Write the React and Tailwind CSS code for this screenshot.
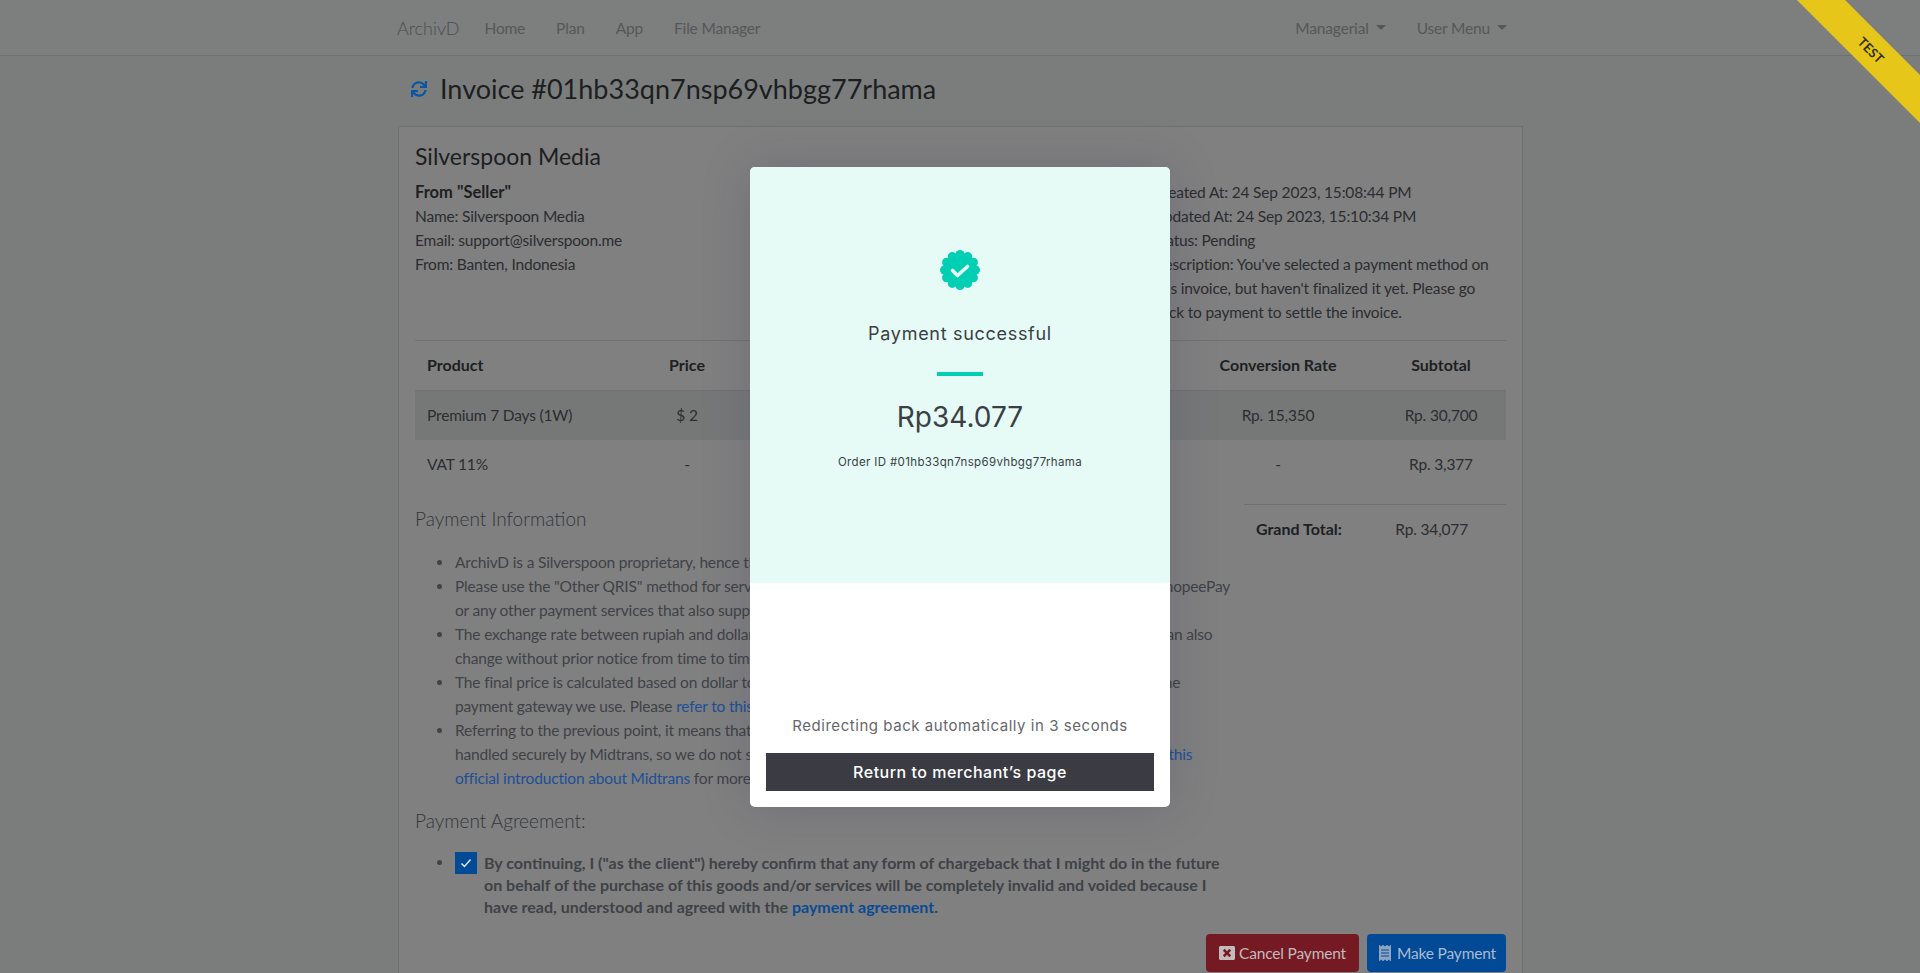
import React from "react";
import { FaSync, FaWindowClose, FaReceipt } from "react-icons/fa";

function Badge() {
  const bumps = Array.from({ length: 12 }, (_, i) => {
    const a = (i * Math.PI) / 6;
    return [20 + 15.5 * Math.cos(a), 20 + 15.5 * Math.sin(a)];
  });
  return (
    <svg width="40" height="40" viewBox="0 0 40 40">
      <circle cx="20" cy="20" r="17" fill="#00cfb4" />
      {bumps.map(([x, y], i) => (
        <circle key={i} cx={x} cy={y} r="4.5" fill="#00cfb4" />
      ))}
      <path d="M12.5 20.5l5 5 10-9" fill="none" stroke="#e6faf6" strokeWidth="3.6" strokeLinecap="round" strokeLinejoin="round" />
    </svg>
  );
}

function Li({ children }) {
  return (
    <li className="flex">
      <span className="w-[40px] shrink-0 pl-[22px] pt-[10px]"><span className="block w-[5px] h-[5px] rounded-full bg-[#3f4246]" /></span>
      <div>{children}</div>
    </li>
  );
}

const L = ({ children }) => <span className="block whitespace-nowrap">{children}</span>;
const A = ({ children }) => <span className="text-[#1d4f96]">{children}</span>;

function Th({ children, className }) {
  return <th className={`font-bold text-[16px] tracking-normal text-[#1d1f22] p-3 h-[49px] ${className || ""}`}>{children}</th>;
}
function Td({ children, className }) {
  return <td className={`px-3 py-0 ${className || ""}`}>{children}</td>;
}

export default function App() {
  return (
    <div className="relative h-[973px] overflow-hidden bg-[#7b7d7d] font-['Lato','Liberation_Sans',sans-serif] text-[15.5px] tracking-[-0.17px] leading-6 text-[#2b2d30]">
      <nav className="h-[56px] bg-[#7d7e7e] border-b border-[#6e7070]">
        <div className="w-[1140px] mx-auto pl-[7px] pr-[23px] h-[55px] flex items-center text-[#565758]">
          <span className="text-[18px] font-light tracking-normal text-[#4c4d4e] mr-[25px]">ArchivD</span>
          <div className="flex gap-[31px]">
            <span>Home</span>
            <span>Plan</span>
            <span>App</span>
            <span>File Manager</span>
          </div>
          <div className="ml-auto flex gap-[31px]">
            <span className="flex items-center">Managerial<span className="ml-[7px] border-t-[5px] border-x-[5px] border-x-transparent border-t-[#565758]" /></span>
            <span className="flex items-center">User Menu<span className="ml-[7px] border-t-[5px] border-x-[5px] border-x-transparent border-t-[#565758]" /></span>
          </div>
        </div>
      </nav>

      <main className="w-[1125px] ml-[398px]">
        <h1 className="h-[70px] flex items-center pl-[13px] pb-[5px] text-[27px] tracking-normal leading-[34px] text-[#1c1e21]">
          <FaSync className="w-4 h-4 text-[#0a56a5] mr-[13px] mt-[1px]" />
          <span>Invoice #01hb33qn7nsp69vhbgg77rhama</span>
        </h1>

        <section className="bg-[#808080] border border-[#6e7070] px-4 pt-[15px] h-[860px]">
          <div className="flex h-[199px] border-b border-[#6f7171]">
            <div className="w-[738px]">
              <h2 className="text-[23px] tracking-normal leading-[29px] text-[#1c1e21] mb-[9px]">Silverspoon Media</h2>
              <b className="block text-[16.5px] tracking-normal text-[#1d1f22]">From "Seller"</b>
              <p>Name: Silverspoon Media</p>
              <p>Email: support@silverspoon.me</p>
              <p>From: Banten, Indonesia</p>
            </div>
            <div className="pt-[38px] whitespace-nowrap">
              <p>Created At: 24 Sep 2023, 15:08:44 PM</p>
              <p>Updated At: 24 Sep 2023, 15:10:34 PM</p>
              <p>Status: Pending</p>
              <p>Description: You've selected a payment method on</p>
              <p>this invoice, but haven't finalized it yet. Please go</p>
              <p>back to payment to settle the invoice.</p>
            </div>
          </div>

          <table className="w-[1091px] table-fixed border-collapse text-center">
            <colgroup>
              <col className="w-[225px]" />
              <col className="w-[94px]" />
              <col className="w-[223px]" />
              <col className="w-[223px]" />
              <col className="w-[196px]" />
              <col className="w-[130px]" />
            </colgroup>
            <thead>
              <tr className="h-[49px] border-b border-[#6f7171]">
                <Th className="text-left">Product</Th>
                <Th>Price</Th>
                <Th>Quantity</Th>
                <Th>Total Price</Th>
                <Th>Conversion Rate</Th>
                <Th>Subtotal</Th>
              </tr>
            </thead>
            <tbody>
              <tr className="bg-[#767878] h-[50px]">
                <Td className="text-left">Premium 7 Days (1W)</Td>
                <Td>$ 2</Td>
                <Td>1</Td>
                <Td>$ 2</Td>
                <Td>Rp. 15,350</Td>
                <Td>Rp. 30,700</Td>
              </tr>
              <tr className="h-[48px]">
                <Td className="text-left">VAT 11%</Td>
                <Td>-</Td>
                <Td>-</Td>
                <Td>-</Td>
                <Td>-</Td>
                <Td>Rp. 3,377</Td>
              </tr>
            </tbody>
          </table>

          <div className="flex">
            <div className="w-[829px] text-[#3f4246]">
              <h5 className="text-[19px] tracking-normal font-light leading-6 text-[#33353a] mt-[19px] mb-[19px]">Payment Information</h5>
              <ul>
                <Li><L>ArchivD is a Silverspoon proprietary, hence the payment is handled by the company itself.</L></Li>
                <Li>
                  <L>Please use the "Other QRIS" method for services such as GoPay, OVO, Dana, LinkAja, Sakuku, Jenius, Flip, ShopeePay</L>
                  <L>or any other payment services that also support QRIS.</L>
                </Li>
                <Li>
                  <L>The exchange rate between rupiah and dollar follows the usual daily market rate set by our provider, and it can also</L>
                  <L>change without prior notice from time to time.</L>
                </Li>
                <Li>
                  <L>The final price is calculated based on dollar to rupiah conversion and the additional payment service fee of the</L>
                  <L>payment gateway we use. Please <A>refer to this page for the details.</A></L>
                </Li>
                <Li>
                  <L>Referring to the previous point, it means that all payments and all the user data are processed by <A>Midtrans</A></L>
                  <L>handled securely by Midtrans, so we do not store any of your own cards and bank account data. Please read <A>this</A></L>
                  <L><A>official introduction about Midtrans</A> for more information.</L>
                </Li>
              </ul>
              <h5 className="text-[19px] tracking-normal font-light leading-6 text-[#33353a] mt-[19px] mb-[18px]">Payment Agreement:</h5>
              <div className="flex">
                <span className="w-[40px] shrink-0 pl-[22px] pt-[9px]"><span className="block w-[5px] h-[5px] rounded-full bg-[#3f4246]" /></span>
                <span className="w-[22px] h-[22px] shrink-0 bg-[#034a96] flex items-center justify-center mr-[7px] mt-[1px]">
                  <svg width="14" height="14" viewBox="0 0 14 14"><path d="M2.5 7.5l3 3 6-7" fill="none" stroke="#dfe6ee" strokeWidth="1.5" /></svg>
                </span>
                <p className="font-bold text-[16px] tracking-normal leading-[22px] text-[#3f4246] mt-[1px]">
                  <L>By continuing, I ("as the client") hereby confirm that any form of chargeback that I might do in the future</L>
                  <L>on behalf of the purchase of this goods and/or services will be completely invalid and voided because I</L>
                  <L>have read, understood and agreed with the <span className="text-[#0b4a92]">payment agreement</span>.</L>
                </p>
              </div>
            </div>
            <div className="ml-auto w-[262px] mt-[16px] border-t border-[#6f7171] h-[49px] flex items-center pl-3 pr-[38px] justify-between">
              <b className="text-[16px] tracking-normal text-[#1d1f22]">Grand Total:</b>
              <span>Rp. 34,077</span>
            </div>
          </div>

          <div className="flex justify-end gap-2 mt-[16px]">
            <button className="h-[38px] w-[153px] rounded bg-[#751a23] text-[#c2babb] flex items-center justify-center gap-1">
              <FaWindowClose className="w-4 h-4" /> Cancel Payment
            </button>
            <button className="h-[38px] w-[139px] rounded bg-[#034a96] text-[#a9bbd2] flex items-center justify-center gap-1">
              <FaReceipt className="w-4 h-4 text-[#8ea4bf]" /> Make Payment
            </button>
          </div>
        </section>
      </main>

      <div className="absolute top-[21px] right-[-44px] w-[210px] h-[34px] rotate-45 bg-[#e6c619] flex items-center justify-center text-[13px] tracking-normal font-bold text-[#33300f] pl-[34px]">
        TEST
      </div>

      <div className="absolute left-[750px] top-[167px] w-[420px] h-[640px] rounded-[5px] overflow-hidden bg-white shadow-[0_0_50px_rgba(40,40,90,0.18)] flex flex-col tracking-normal font-['Inter','Liberation_Sans',sans-serif]">
        <div className="h-[416px] bg-[#e6faf6] flex flex-col items-center pt-[83px] text-[#3a3f45]">
          <Badge />
          <p className="mt-[30px] text-[18px] leading-7 tracking-[0.7px]">Payment successful</p>
          <span className="block w-[46px] h-1 bg-[#00cfb4] mt-[24px]" />
          <p className="mt-[25px] text-[28px] leading-[32px]">Rp34.077</p>
          <p className="mt-[19px] text-[11.5px] leading-5 tracking-[0.35px]">Order ID #01hb33qn7nsp69vhbgg77rhama</p>
        </div>
        <div className="flex-1 flex flex-col justify-end px-4 pb-4">
          <p className="text-center text-[15px] leading-6 tracking-[0.55px] text-[#66676c] mb-[15px]">Redirecting back automatically in 3 seconds</p>
          <button className="h-[38px] bg-[#3a3b43] text-white font-medium text-[16px] tracking-[0.5px]">Return to merchant’s page</button>
        </div>
      </div>
    </div>
  );
}
